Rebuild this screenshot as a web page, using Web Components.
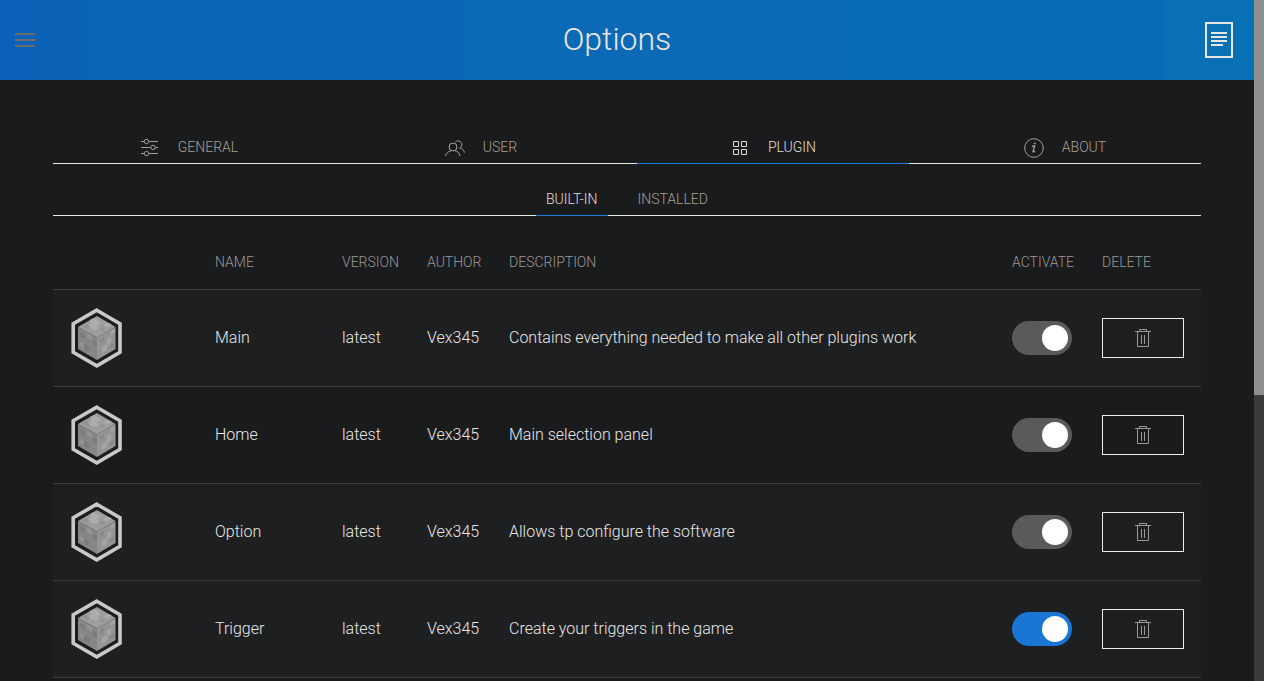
<!DOCTYPE html>
<html lang="en">
<head>
<meta charset="utf-8">
<title>Options</title>
<style>
  body { margin: 0; background: #1a1b1d; font: 300 16px/20px Roboto, sans-serif; color: #e8e8e8; }
</style>
</head>
<body>
<options-app></options-app>

<template id="app-header-t">
  <style>
    :host { display: flex; align-items: center; height: 80px; background: linear-gradient(90deg, #0d60b8, #0b64b6 8%, #0b64b6 37%, #0b69b5 37%, #0b69b5 67%, #066cb3 69%, #066cb3 93%, #0a70b5 93%); }
    h1 { flex: 1; margin: 0; padding-bottom: 2px; text-align: center; font-size: 32px; line-height: 40px; font-weight: 300; color: #e8e6e3; }
    button { border: 0; padding: 0; background: none; height: 80px; display: flex; align-items: center; justify-content: center; }
    .menu { width: 50px; }
    .log { width: 70px; }
    svg { display: block; }
  </style>
  <button class="menu" aria-label="Menu"><svg width="20" height="14" fill="#6b6b6b"><path d="M0 0h20v2H0zM0 6h20v2H0zM0 12h20v2H0z"/></svg></button>
  <h1><slot></slot></h1>
  <button class="log" aria-label="Logs"><svg width="28" height="36" fill="#e8e6e3"><path fill-rule="evenodd" d="M0 0h28v36H0zM2 2v32h24V2z"/><path d="M6 10h16v2H6zM6 14h16v2H6zM6 18h16v2H6zM6 22h12v2H6z"/></svg></button>
</template>

<template id="tab-bar-t">
  <style>
    :host { display: flex; justify-content: center; gap: 20px; border-bottom: 1px solid #e8e6e3; }
    :host([fill]) ::slotted(*) { flex: 1; --tab-end: 12px; }
  </style>
  <slot></slot>
</template>

<template id="tab-item-t">
  <style>
    :host { display: block; color: #a8a095; margin-bottom: -1px; border-bottom: 1px solid transparent; }
    :host([active]) { color: #e0deda; border-color: #1f7fe0; }
    button { width: 100%; height: 32px; padding: 0 var(--tab-end, 10px) 0 10px; border: 0; background: none; color: inherit; font: inherit; font-size: 14px; line-height: 20px; text-transform: uppercase; display: flex; align-items: center; justify-content: center; gap: 16px; }
  </style>
  <button><slot name="icon"></slot><slot></slot></button>
</template>

<template id="plugin-logo-t">
  <style>
    :host { display: block; width: 60px; height: 60px; }
    svg { display: block; }
  </style>
  <svg width="60" height="60" viewBox="1 0 60 60">
    <path d="M29.800 2.200 53 15.800v28.400L29.800 57.800 6.200 44.200V15.800z" fill="#1c1d1f" stroke="#cac8c9" stroke-width="3.600"/>
    <path d="M30 8 48.500 19 30 29.500 11 19z" fill="#9d9d9d"/>
    <path d="M11 19 30 29.500V52L11 41z" fill="#868686"/>
    <path d="M48.500 19 30 29.500V52l18.500-11z" fill="#959595"/>
    <g fill="#acacac"><path d="m23 12 4-2 4 2 3 3-4 3 3 2-5 2-5-2-3-3 4-1z"/><path d="m37 16 5-1 3 2-4 2-4-1z"/></g>
    <g fill="#929292"><path d="m15 18 5-2 3 3-3 2zM34 19l5 2-4 2-3-2z"/></g>
    <g fill="#939393"><path d="m20 25 5 3v5l-5-3zM13 34l4 2v4l-4-2z"/></g>
    <g fill="#7b7b7b"><path d="m13 24 5 3v4l-5-3zM17 36l5 3v5l-5-3zM26 32l4 2v5l-4-2z"/></g>
    <g fill="#a4a4a4"><path d="m40 31 4-2v6l-4 3v4l-5 3v-6l5-3z"/><path d="m44 23 4-2v4l-4 2z"/></g>
    <g fill="#898989"><path d="m33 31 4-2v4l-4 3zM43 37l4-2v4l-4 2z"/></g>
  </svg>
</template>

<template id="toggle-switch-t">
  <style>
    :host { display: block; width: 60px; height: 34px; }
    input { appearance: none; display: flex; align-items: center; justify-content: flex-end; box-sizing: border-box; width: 60px; height: 34px; margin: 0; padding: 4px; border-radius: 17px; background: #1976d5; }
    input::before { content: ""; width: 26px; height: 26px; border-radius: 50%; background: #fff; }
    input:not(:checked) { justify-content: flex-start; }
    input:disabled, input:not(:checked) { background: #5a5a5a; }
  </style>
  <input type="checkbox" checked>
</template>

<template id="delete-button-t">
  <style>
    :host { display: block; }
    button { box-sizing: border-box; width: 82px; height: 40px; padding: 0; border: 1px solid #eee; background: none; color: #999; display: flex; align-items: center; justify-content: center; }
    svg { display: block; }
  </style>
  <button><svg width="16" height="18" fill="none" stroke="currentColor"><path d="M0 2.500h16M4.500 2.500v-2h7v2M2.500 2.500v15h11v-15M6.500 6v9M9.500 6v9"/></svg></button>
</template>

<template id="plugin-table-t">
  <style>
    :host { display: block; }
    table { width: 100%; table-layout: fixed; border-collapse: separate; border-spacing: 0; text-align: left; }
    th, td { padding: 0 0 0 15px; border-bottom: 1px solid #3a3b3d; font-weight: 300; }
    th { height: 37px; padding-top: 36px; font-size: 14px; line-height: 20px; color: #999; text-transform: uppercase; vertical-align: top; }
    td { height: 96px; line-height: 20px; }
    tr.raised { background: #1e1f21; }
    .logo { width: 132px; } .name { width: 112px; } .version { width: 70px; } .author { width: 67px; } .activate { width: 75px; } .delete { width: 99px; }
  </style>
  <table>
    <thead><tr><th class="logo"></th><th class="name">Name</th><th class="version">Version</th><th class="author">Author</th><th>Description</th><th class="activate">Activate</th><th class="delete">Delete</th></tr></thead>
    <tbody></tbody>
  </table>
</template>

<template id="scroll-rail-t">
  <style>
    :host { display: block; width: 10px; height: 100vh; background: #3a3a3a; }
    div { height: 58%; background: #8e908f; }
  </style>
  <div></div>
</template>

<template id="options-app-t">
  <style>
    :host { display: flex; height: 100vh; overflow: hidden; }
    .page { flex: 1; min-width: 0; }
    main { padding: 51px 53px 0; }
    tab-bar + tab-bar { margin-top: 19px; }
    svg { display: block; width: 24px; height: 24px; fill: none; stroke: currentColor; }
  </style>
  <div class="page">
    <app-header>Options</app-header>
    <main>
      <tab-bar fill>
        <tab-item><svg slot="icon" viewBox="0 0 24 24"><path d="M3 6.500h3M11 6.500h9M3 12.500h9.500M17.500 12.500H20M3 18.500h3M11 18.500h9"/><circle cx="8.500" cy="6.500" r="2.200"/><circle cx="15" cy="12.500" r="2.200"/><circle cx="8.500" cy="18.500" r="2.200"/></svg>General</tab-item>
        <tab-item><svg slot="icon" viewBox="0 0 24 24"><circle cx="10" cy="12" r="4"/><path d="M2.500 21c.8-3 2.700-4.600 5.500-5.200M12 15.800c2.800.600 4.500 2.200 5 5.200M12.500 6.700c2-1.500 5.700-.800 6.300 2 .4 2-.3 3.600-2 4.300 2.700.7 4.200 2.200 4.700 4.500"/></svg>User</tab-item>
        <tab-item active><svg slot="icon" viewBox="0 0 24 24"><path d="M5.500 6.500h5v5h-5zM13.500 6.500h5v5h-5zM5.500 14.500h5v5h-5zM13.500 14.500h5v5h-5z"/></svg>Plugin</tab-item>
        <tab-item><svg slot="icon" viewBox="0 0 24 24"><circle cx="12" cy="13" r="9.300"/><path d="M10 11.500c1-.6 1.800-.8 2.700-.7L11 16.500c-.2.800.7.700 2-.5" stroke-width="1.300"/><circle cx="12.800" cy="8.500" r=".6" fill="currentColor"/></svg>About</tab-item>
      </tab-bar>
      <tab-bar><tab-item active>Built-in</tab-item><tab-item>Installed</tab-item></tab-bar>
      <plugin-table></plugin-table>
    </main>
  </div>
  <scroll-rail></scroll-rail>
</template>

<script>
  class Base extends HTMLElement {
    constructor() {
      super();
      this.attachShadow({ mode: 'open' }).append(
        document.getElementById(this.localName + '-t').content.cloneNode(true));
    }
  }
  class ToggleSwitch extends Base {
    connectedCallback() {
      const input = this.shadowRoot.querySelector('input');
      input.disabled = this.hasAttribute('locked');
      input.setAttribute('aria-label', this.getAttribute('label'));
    }
  }
  class DeleteButton extends Base {
    connectedCallback() {
      this.shadowRoot.querySelector('button').setAttribute('aria-label', this.getAttribute('label'));
    }
  }
  class PluginTable extends Base {
    connectedCallback() {
      const plugins = [
        ['Main', 'Contains everything needed to make all other plugins work', true],
        ['Home', 'Main selection panel', true],
        ['Option', 'Allows tp configure the software', true],
        ['Trigger', 'Create your triggers in the game', false]
      ];
      this.shadowRoot.querySelector('tbody').innerHTML = plugins.map(([name, text, locked], i) =>
        `<tr class="${i === 1 ? '' : 'raised'}"><td><plugin-logo></plugin-logo></td><td>${name}</td><td>latest</td><td>Vex345</td><td>${text}</td>` +
        `<td><toggle-switch label="Activate ${name}" ${locked ? 'locked' : ''}></toggle-switch></td>` +
        `<td><delete-button label="Delete ${name}"></delete-button></td></tr>`).join('');
    }
  }
  customElements.define('app-header', class extends Base {});
  customElements.define('tab-bar', class extends Base {});
  customElements.define('tab-item', class extends Base {});
  customElements.define('plugin-logo', class extends Base {});
  customElements.define('scroll-rail', class extends Base {});
  customElements.define('toggle-switch', ToggleSwitch);
  customElements.define('delete-button', DeleteButton);
  customElements.define('plugin-table', PluginTable);
  customElements.define('options-app', class extends Base {});
</script>
</body>
</html>
